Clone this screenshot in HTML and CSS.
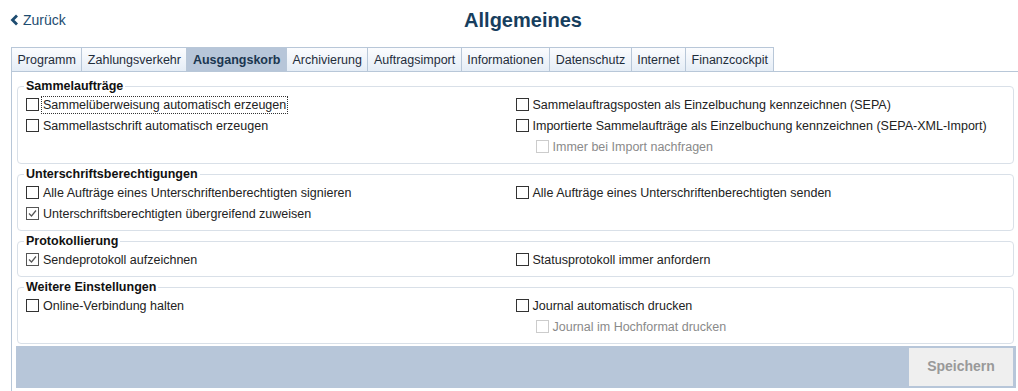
FILE: index.html
```html
<!DOCTYPE html>
<html>
<head>
    <title>Allgemeines</title>
    <link rel="stylesheet" href="styles.css">
</head>
<body>
    <div class="header">
        <a class="back" href="#">
            <svg width="9" height="12" viewBox="0 0 9 12"><path d="M7 1.5 L2.5 6 L7 10.5" fill="none" stroke="#1d4c70" stroke-width="2.8"/></svg>
            Zurück
        </a>
        <h1>Allgemeines</h1>
    </div>

    <div class="tabs">
        <div class="tab">Programm</div>
        <div class="tab">Zahlungsverkehr</div>
        <div class="tab active">Ausgangskorb</div>
        <div class="tab">Archivierung</div>
        <div class="tab">Auftragsimport</div>
        <div class="tab">Informationen</div>
        <div class="tab">Datenschutz</div>
        <div class="tab">Internet</div>
        <div class="tab">Finanzcockpit</div>
    </div>

    <div class="panel">
        <fieldset>
            <legend>Sammelaufträge</legend>
            <div class="cols">
                <div class="col">
                    <div class="row"><span class="box"></span><span class="text focus">Sammelüberweisung automatisch erzeugen</span></div>
                    <div class="row"><span class="box"></span><span class="text">Sammellastschrift automatisch erzeugen</span></div>
                </div>
                <div class="col">
                    <div class="row"><span class="box"></span><span class="text">Sammelauftragsposten als Einzelbuchung kennzeichnen (SEPA)</span></div>
                    <div class="row"><span class="box"></span><span class="text">Importierte Sammelaufträge als Einzelbuchung kennzeichnen (SEPA-XML-Import)</span></div>
                    <div class="row sub disabled"><span class="box"></span><span class="text">Immer bei Import nachfragen</span></div>
                </div>
            </div>
        </fieldset>

        <fieldset>
            <legend>Unterschriftsberechtigungen</legend>
            <div class="cols">
                <div class="col">
                    <div class="row"><span class="box"></span><span class="text">Alle Aufträge eines Unterschriftenberechtigten signieren</span></div>
                    <div class="row"><span class="box checked"><svg width="11" height="11" viewBox="0 0 11 11"><path d="M2 5.5 L4.5 8 L9 2.5" fill="none" stroke="#555" stroke-width="1.2"/></svg></span><span class="text">Unterschriftsberechtigten übergreifend zuweisen</span></div>
                </div>
                <div class="col">
                    <div class="row"><span class="box"></span><span class="text">Alle Aufträge eines Unterschriftenberechtigten senden</span></div>
                </div>
            </div>
        </fieldset>

        <fieldset>
            <legend>Protokollierung</legend>
            <div class="cols">
                <div class="col">
                    <div class="row"><span class="box checked"><svg width="11" height="11" viewBox="0 0 11 11"><path d="M2 5.5 L4.5 8 L9 2.5" fill="none" stroke="#555" stroke-width="1.2"/></svg></span><span class="text">Sendeprotokoll aufzeichnen</span></div>
                </div>
                <div class="col">
                    <div class="row"><span class="box"></span><span class="text">Statusprotokoll immer anfordern</span></div>
                </div>
            </div>
        </fieldset>

        <fieldset>
            <legend>Weitere Einstellungen</legend>
            <div class="cols">
                <div class="col">
                    <div class="row"><span class="box"></span><span class="text">Online-Verbindung halten</span></div>
                </div>
                <div class="col">
                    <div class="row"><span class="box"></span><span class="text">Journal automatisch drucken</span></div>
                    <div class="row sub disabled"><span class="box"></span><span class="text">Journal im Hochformat drucken</span></div>
                </div>
            </div>
        </fieldset>

        <div class="footer">
            <button class="save">Speichern</button>
        </div>
    </div>
</body>
</html>
```

FILE: styles.css
```css
body {
    font-family: "Liberation Sans", Arial, sans-serif;
    font-size: 12.5px;
    color: #222;
    background: #fff;
    margin: 0;
    padding: 0;
}

.header {
    position: relative;
    height: 47px;
    display: flex;
    align-items: center;
    justify-content: center;
}

.back {
    position: absolute;
    left: 10px;
    top: 12px;
    display: flex;
    align-items: center;
    gap: 4px;
    color: #1d4c70;
    font-size: 14px;
    text-decoration: none;
}

h1 {
    margin: 0 0 7px 28px;
    font-size: 20px;
    color: #173e5e;
}

.tabs {
    display: flex;
    margin-left: 11px;
    border-bottom: 1px solid #b8c7d8;
}

.tab {
    height: 23px;
    line-height: 24px;
    padding: 0 5.5px;
    border: 1px solid #b8c7d8;
    border-bottom: none;
    margin-right: -1px;
    background: linear-gradient(#fbfcfe, #e5edf6);
    color: #1f2d3b;
    white-space: nowrap;
}

.tab.active {
    background: #b7c6d9;
    font-weight: bold;
    color: #1b3650;
}

.panel {
    margin-left: 11px;
    border-left: 1px solid #b8c7d8;
    padding: 6px 4px 4px 5px;
}

fieldset {
    margin: 0 0 2px 0;
    padding: 0 8px 6px 8px;
    border: 1px solid #d9e0e8;
    border-radius: 4px;
}

legend {
    font-weight: bold;
    line-height: 16px;
    padding: 0 2px;
    margin-left: -2px;
    color: #111;
}

.cols {
    display: grid;
    grid-template-columns: 1fr 1fr;
}

.row {
    display: flex;
    align-items: center;
    height: 21px;
    white-space: nowrap;
}

.row.sub {
    padding-left: 20px;
}

.box {
    width: 11px;
    height: 11px;
    border: 1px solid #333;
    background: #fff;
    margin-right: 2px;
    display: flex;
    align-items: center;
    justify-content: center;
    flex-shrink: 0;
}

.box.checked {
    border-color: #555;
}

.disabled .box {
    border-color: #ccc;
}

.disabled .text {
    color: #8a8a8a;
}

.text {
    padding: 1px 1px;
    border: 1px dotted transparent;
}

.text.focus {
    border-color: #333;
}

.footer {
    background: #b7c6d9;
    height: 42px;
    margin-right: -2px;
    margin-left: -1px;
    display: flex;
    justify-content: flex-end;
    align-items: center;
    padding-right: 3px;
}

.save {
    width: 104px;
    height: 38px;
    border: none;
    background: #efefef;
    color: #999;
    font-family: "Liberation Sans", Arial, sans-serif;
    font-weight: bold;
    font-size: 14px;
    padding-bottom: 3px;
}
```
